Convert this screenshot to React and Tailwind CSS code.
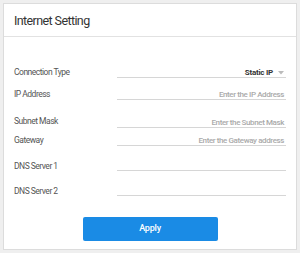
import React from 'react';

const rows = [
    { label: 'Connection Type', mt: 'mt-0', select: 'Static IP' },
    { label: 'IP Address', mt: 'mt-[12px]', placeholder: 'Enter the IP Address' },
    { label: 'Subnet Mask', mt: 'mt-[18px]', placeholder: 'Enter the Subnet Mask', labelShift: '-translate-y-[1px]' },
    { label: 'Gateway', mt: 'mt-[8px]', placeholder: 'Enter the Gateway address' },
    { label: 'DNS Server 1', mt: 'mt-[15px]', labelShift: 'translate-y-[1px]' },
    { label: 'DNS Server 2', mt: 'mt-[15px]', labelShift: 'translate-y-[1px]' },
];

export default function App() {
    return (
        <div className="w-[300px] h-[253px] bg-[#efefef] pt-[3px] pl-[3px] font-['Roboto',sans-serif]">
            <div className="w-[294px] h-[247px] bg-white border border-[#dcdcdc]">
                <div className="h-[33px] border-b border-[#e2e2e2] flex items-center pl-[10px] pt-[2px]">
                    <h2 className="text-[12.5px] tracking-[-0.6px] text-[#333] leading-none">Internet Setting</h2>
                </div>
                <div className="pt-[31px] pl-[10px] pr-[10px]">
                    {rows.map(r => (
                        <div key={r.label} className={`${r.mt} flex items-start h-[10px]`}>
                            <div className={`w-[103px] text-[8.5px] tracking-[-0.5px] leading-[9px] text-[#555] ${r.labelShift || ''}`}>{r.label}</div>
                            <div className="flex-1 h-[10px] border-b border-[#d6d6d6] flex items-start justify-end pr-[2px]">
                                {r.select && (
                                    <span className="flex items-center text-[8px] tracking-[-0.25px] leading-[9px] font-bold text-[#333]">
                                        {r.select}
                                        <svg width="6" height="4" viewBox="0 0 6 4" className="ml-[5px]">
                                            <path d="M0 0 L6 0 L3 3.5 Z" fill="#bbb" />
                                        </svg>
                                    </span>
                                )}
                                {r.placeholder && (
                                    <span className="text-[8px] tracking-[-0.4px] leading-[9px] font-medium text-[#aaa]">{r.placeholder}</span>
                                )}
                            </div>
                        </div>
                    ))}
                    <div className="mt-[21px] flex justify-center">
                        <button className="w-[135px] h-[24px] rounded-[2px] bg-[#1a8be5] text-white text-[9px] tracking-[-0.2px] font-medium">
                            Apply
                        </button>
                    </div>
                </div>
            </div>
        </div>
    );
}
